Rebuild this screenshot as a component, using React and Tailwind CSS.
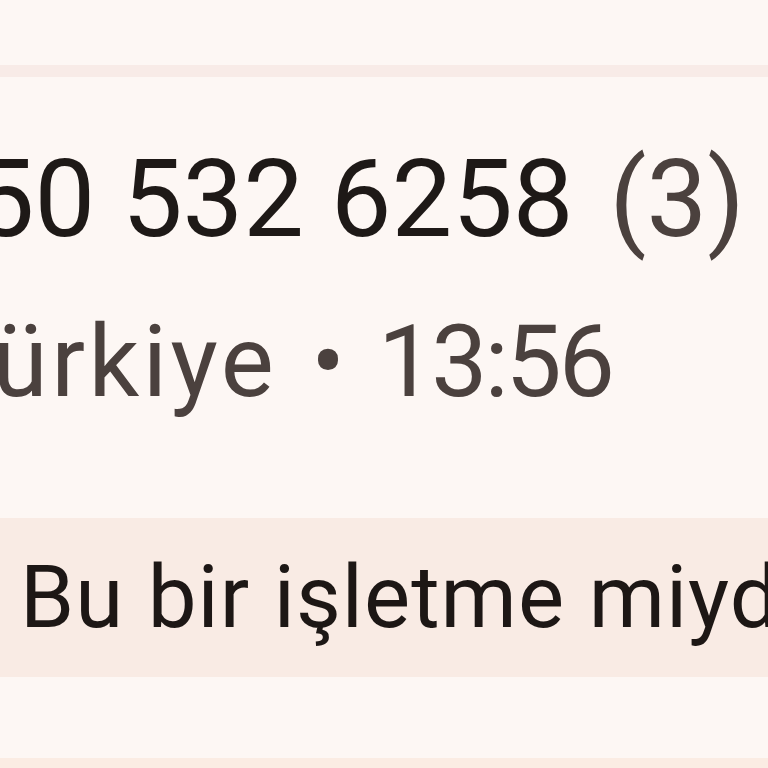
import React from 'react'

export default function App() {
  return (
    <div
      className="w-[768px] h-[768px] overflow-hidden bg-[#fdf7f4] flex flex-col"
      style={{ fontFamily: '"Roboto", "Noto Sans", sans-serif' }}
    >
      {/* top bar + divider */}
      <div className="h-[65px] shrink-0" />
      <div className="h-[12px] shrink-0 bg-[#f8ebe7]" />

      {/* contact info */}
      <div className="flex flex-col pt-[68px] h-[441px] shrink-0">
        <div className="whitespace-nowrap ml-[-87px] text-[108px] leading-none text-[#1e1917]">
          550 532 6258<span className="ml-[36px] text-[#4b413e]">(3)</span>
        </div>
        <div className="flex items-baseline whitespace-nowrap ml-[-66px] mt-[59px] text-[100px] leading-none text-[#4b413e]">
          <span className="tracking-[3.5px]">Türkiye</span>
          <span className="ml-[34px]">•</span>
          <span className="ml-[33px] tracking-[-3px]">13:56</span>
        </div>
      </div>

      {/* business question */}
      <div className="h-[159px] shrink-0 bg-[#f9ebe4] flex items-center px-[20px]">
        <span className="whitespace-nowrap text-[87px] leading-none text-[#1d1715] tracking-[1px] [word-spacing:1px]">
          Bu bir işletme miydi?
        </span>
      </div>

      <div className="h-[81px] shrink-0" />
      <div className="flex-1 bg-[#fbece3]" />
    </div>
  )
}
